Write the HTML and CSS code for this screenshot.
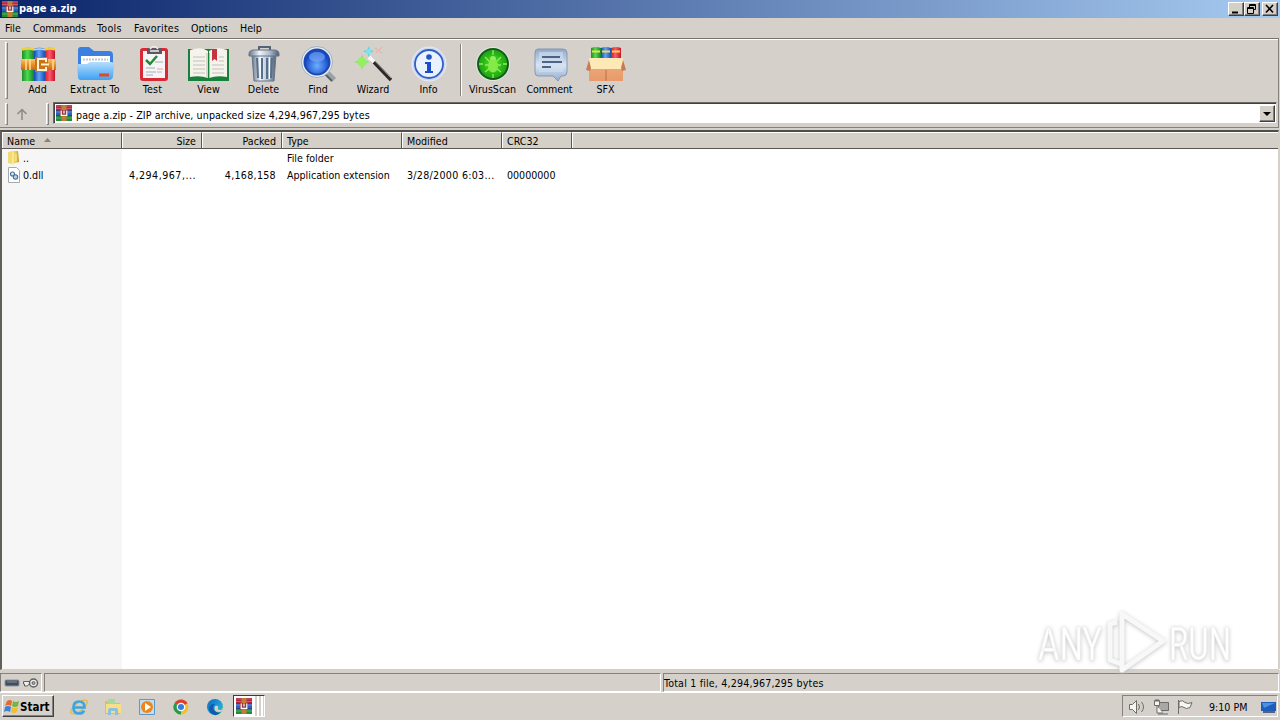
FILE: index.html
```html
<!DOCTYPE html>
<html lang="en">
<head>
<meta charset="utf-8">
<title>page a.zip</title>
<link rel="stylesheet" href="styles.css">
</head>
<body>
<svg class="defs" width="0" height="0">
  <defs>
    <linearGradient id="red" x2="1" y2="0"><stop offset="0" stop-color="#c8202f"/><stop offset=".45" stop-color="#ff5967"/><stop offset="1" stop-color="#c2142b"/></linearGradient>
    <linearGradient id="green" x2="1" y2="0"><stop offset="0" stop-color="#1c8f2d"/><stop offset=".45" stop-color="#4fd94d"/><stop offset="1" stop-color="#12832c"/></linearGradient>
    <linearGradient id="blue" x2="1" y2="0"><stop offset="0" stop-color="#1747a8"/><stop offset=".45" stop-color="#5aa5f8"/><stop offset="1" stop-color="#1d4cb0"/></linearGradient>
    <linearGradient id="belt" x2="0" y2="1"><stop offset="0" stop-color="#fbc569"/><stop offset=".5" stop-color="#e8912b"/><stop offset="1" stop-color="#c9680f"/></linearGradient>
    <linearGradient id="folder" x2="0" y2="1"><stop offset="0" stop-color="#b5defd"/><stop offset="1" stop-color="#3fa0f3"/></linearGradient>
    <linearGradient id="steel" x2="1" y2="0"><stop offset="0" stop-color="#66758a"/><stop offset=".35" stop-color="#eef4fa"/><stop offset=".7" stop-color="#a9b9cb"/><stop offset="1" stop-color="#4c5b70"/></linearGradient>
    <linearGradient id="note" x2="0" y2="1"><stop offset="0" stop-color="#8fa8c8"/><stop offset=".5" stop-color="#d9e5f4"/><stop offset="1" stop-color="#93abcb"/></linearGradient>
    <linearGradient id="gold" x2="1" y2="0"><stop offset="0" stop-color="#f7e694"/><stop offset=".6" stop-color="#e9c94c"/><stop offset="1" stop-color="#bd8f1c"/></linearGradient>
    <linearGradient id="box" x2="0" y2="1"><stop offset="0" stop-color="#eda676"/><stop offset="1" stop-color="#e79a6b"/></linearGradient>
    <linearGradient id="edge" x2="1" y2="1"><stop offset="0" stop-color="#0e63b7"/><stop offset=".55" stop-color="#1b9de0"/><stop offset="1" stop-color="#4ccb6c"/></linearGradient>
    <radialGradient id="lens" cy=".65"><stop offset="0" stop-color="#6eb0ff"/><stop offset="1" stop-color="#1549c8"/></radialGradient>
    <radialGradient id="glow"><stop offset="0" stop-color="#55e51f"/><stop offset="1" stop-color="#18a010"/></radialGradient>
    <symbol id="rar" viewBox="0 0 16 16">
      <path d="M0 0h16v16H0z" fill="#3f2440"/>
      <path d="M0 0h16v5H0z" fill="#b5263f"/><path d="M0 1h16M0 3.500h16" stroke="#e0788a" stroke-width=".6"/>
      <path d="M0 5.500h16v5H0z" fill="#2c5fc0"/><path d="M0 7h16" stroke="#82a8e8" stroke-width=".7"/>
      <path d="M0 11h16v5H0z" fill="#218a3c"/><path d="M0 13h16" stroke="#6cc47c" stroke-width=".7"/>
      <path d="M5.500 0h5v16h-5z" fill="#c47c34"/>
      <path d="M4 5h8v6H4z" fill="#93383e"/><path d="M5.200 5.500v4.800h5.600V5.500M8 5.500v3" fill="none" stroke="#fff" stroke-width="1.200"/>
    </symbol>
  </defs>
</svg>
<div class="screen">
  <header class="title">
    <svg class="i16"><use href="#rar"/></svg><span class="title-text">page a.zip</span>
    <div class="winbtns">
      <span class="wb"><svg width="14" height="12"><path d="M3 8.500h6v2H3z"/></svg></span>
      <span class="wb"><svg width="14" height="12"><path d="M4.500 4V1.500h6v5H8M4 2.500h7M2.500 4.500h6v6h-6zM2 5.500h7" fill="none" stroke="#000"/></svg></span>
      <span class="wb close"><svg width="14" height="12"><path d="M3 2l7 7.500M10 2L3 9.500" stroke="#000" stroke-width="1.600"/></svg></span>
    </div>
  </header>
  <nav class="menu"><span class="m1">File</span><span class="m2">Commands</span><span class="m3">Tools</span><span class="m4">Favorites</span><span class="m5">Options</span><span>Help</span></nav>
  <div class="rebar">
    <div class="toolbar">
      <i class="grip"></i>
      <div class="tool t-add"><svg width="38" height="38" viewBox="0 0 38 38">
        <path d="M3 4q6-3 12 0v32H3z" fill="url(#green)"/><path d="M15 4q5-3 11 0v32H15z" fill="url(#blue)"/><path d="M26 4q5-3 10 0v32H26z" fill="url(#red)"/>
        <path d="M3 4.500q6-2 12 0M26 4.500q5-2 10 0" stroke="#f1cd43" stroke-width="2.500" fill="none"/><path d="M15 5q5-2 11 0" stroke="#b9d6f4" stroke-width="1.500" fill="none"/>
        <path d="M2 14h35v11H2z" fill="url(#belt)"/><path d="M7 14v11M11 14v11M34 14v11" stroke="#ffdf96" stroke-width="1.500"/><path d="M16 12h13v15H16z" fill="#c77418"/><path d="M27 17v-3h-8v11h8v-3M22 19.500h8" stroke="#fff1d1" stroke-width="2" fill="none"/></svg><span>Add</span></div>
      <div class="tool t-extract"><svg width="38" height="38" viewBox="0 0 38 38">
        <path d="M2 5q0-3 3-3h8l5 4h15q4 0 4 4v20H2z" fill="#3b80e0"/><path d="M5 11h29v12H5z" fill="#fff"/><path d="M7 14.500h25" stroke="#bfc6ce" stroke-width="2" stroke-dasharray="2 1"/><path d="M1 19h10l3-2h21q3 0 3 3l-1 12q-1 3-4 3H5q-3 0-3-3z" fill="url(#folder)"/><path d="M23 30h10" stroke="#df4b29" stroke-width="3"/></svg><span>Extract To</span></div>
      <div class="tool t-test"><svg width="38" height="38" viewBox="0 0 38 38">
        <rect x="6" y="3" width="28" height="33" rx="3" fill="#d92836"/><path d="M9 6h22v27H9z" fill="#f5f5f7"/><path d="M13 3h15v6H13z" fill="#5e5660"/><path d="M16 4q4-5 8 0M16 6h9" stroke="#eee" stroke-width="1.500" fill="none"/><path d="M12 15l4 4 7-8" stroke="#258a38" stroke-width="2.500" fill="none"/><path d="M21 17h8M12 23h9M12 27h10M12 30h7" stroke="#a9a9b1" stroke-width="1"/><path d="M23 24h6M23 27h5" stroke="#e1a4aa"/></svg><span>Test</span></div>
      <div class="tool t-view"><svg width="43" height="38" viewBox="0 0 43 38">
        <path d="M1 4h41v32H1z" fill="#15813b"/><path d="M3 5q11-4 18 1v27q-8-3-18-1zM22 6q8-5 18-1v27q-10-2-18 1z" fill="#f6f3eb"/><path d="M6 12h12M6 16h12M6 20h12M6 24h12M6 28h12M25 20h12M25 24h12M25 28h12M32 12h5M32 16h5" stroke="#c2c1bd"/><path d="M20 8v25M22.500 8v25" stroke="#c2bda8"/><path d="M25 4h5v12l-2.500-2-2.500 2z" fill="#c83142"/></svg><span>View</span></div>
      <div class="tool t-del"><svg width="38" height="38" viewBox="0 0 38 38">
        <path d="M14 5V2h11v3" stroke="#536275" stroke-width="2" fill="none"/><path d="M7 10h24l-2 26H9z" fill="url(#steel)" stroke="#66758a"/><path d="M12 13l1 20M17 13v21M22 13v21M27 13l-1 20" stroke="#586f8b" stroke-width="2"/><path d="M14.500 12l1 22M24.500 12v22" stroke="#f4f8fc"/><path d="M4 9q0-4 5-4h20q5 0 5 4v2H4z" fill="url(#steel)" stroke="#66758a"/></svg><span>Delete</span></div>
      <div class="tool t-find"><svg width="38" height="38" viewBox="0 0 38 38">
        <path d="M26 26l9 9" stroke="#9ba1a9" stroke-width="6"/><path d="M25 28l8 8" stroke="#5b6067" stroke-width="2"/><circle cx="18" cy="17" r="15.500" fill="#e8edf3" stroke="#a1b0c1"/><circle cx="18" cy="17" r="12.500" fill="url(#lens)" stroke="#1c48af" stroke-width="2"/><ellipse cx="18" cy="12" rx="8" ry="5" fill="#79a8f8" opacity=".65"/></svg><span>Find</span></div>
      <div class="tool t-wiz"><svg width="38" height="38" viewBox="0 0 38 38">
        <path d="M17 14l20 21" stroke="#2c2928" stroke-width="3.500"/><path d="M18 13l19 20" stroke="#9b9894"/><path d="M15 12l5 5" stroke="#f5f5f2" stroke-width="4"/><path d="M8 9l2 6 6 2-6 2-2 6-2-6-6-2 6-2z" fill="#8fe56c"/><circle cx="8" cy="17" r="4.500" fill="#93f05f"/><path d="M15 1l1 4 4 1-4 2-1 4-2-4-4-2 4-1z" fill="#5bd3e5"/><circle cx="14.500" cy="6.500" r="2.500" fill="#7fe3f0"/><path d="M21 3l7 5M28 2l-6 6" stroke="#e9aaa6"/></svg><span>Wizard</span></div>
      <div class="tool t-info"><svg width="38" height="38" viewBox="0 0 38 38">
        <circle cx="19" cy="19" r="17" fill="#ccd7f0" stroke="#e9edf7"/><circle cx="19" cy="19" r="14" fill="#e9f2fd" stroke="#2f5fc8" stroke-width="1.800"/><circle cx="19" cy="12" r="2.800" fill="#2654c4"/><path d="M15 17h6v9h2v2h-8v-2h2v-7h-2z" fill="#1c4fc5"/></svg><span>Info</span></div>
      <i class="sep"></i>
      <div class="tool t-virus"><svg width="38" height="38" viewBox="0 0 38 38">
        <circle cx="19" cy="19" r="17" fill="#dceadc"/><circle cx="19" cy="19" r="15" fill="url(#glow)" stroke="#155b1b" stroke-width="2"/><circle cx="19" cy="19" r="10" fill="none" stroke="#2fae22"/><path d="M19 5v5M19 29v4M5 19h4M29 19h4M11 12l5 5M27 12l-5 5M11 27l5-4M27 27l-5-4M11 20h16" stroke="#8cf060" stroke-width="1.300"/><circle cx="19" cy="14" r="3" fill="#90f05c"/><ellipse cx="19" cy="21" rx="5" ry="6.500" fill="#85ea48"/></svg><span>VirusScan</span></div>
      <div class="tool t-comment"><svg width="38" height="38" viewBox="0 0 38 38">
        <path d="M7 4h25q4 0 4 4v19q0 4-4 4h-2l-3 5-5-5H7q-3 0-3-4V8q0-4 3-4z" fill="url(#note)" stroke="#8499b7"/><path d="M8 7h24v20H8z" fill="#d0dff2" opacity=".6"/><path d="M11 12h18M11 17h20M11 22h9" stroke="#263d61" stroke-width="1.500"/></svg><span>Comment</span></div>
      <div class="tool t-sfx"><svg width="42" height="38" viewBox="0 0 42 38">
        <path d="M6 3q5-2 10 0v12H6z" fill="url(#green)"/><path d="M16 3q5-2 10 0v12H16z" fill="url(#blue)"/><path d="M26 3q5-2 10 0v12H26z" fill="url(#red)"/><path d="M7 6.500h8M17 6.500h8M27 6.500h8" stroke="#f8db43" stroke-width="1.800"/><path d="M4 22h34v14H4z" fill="url(#box)"/><path d="M4 13h34v11H4z" fill="#fce9b5"/><path d="M4 15l-3 10 4 1 1-3zM38 15l3 10-4 1-1-3z" fill="#c67b50"/><path d="M21 25v11" stroke="#bb7149"/></svg><span>SFX</span></div>
    </div>
    <div class="address">
      <i class="grip"></i><svg class="up" width="12" height="12"><path d="M6 12V2M1.500 6L6 1.500 10.500 6" fill="none" stroke="#8c8986" stroke-width="1.500"/></svg><i class="grip second"></i>
      <div class="combo"><svg class="i16"><use href="#rar"/></svg><span>page a.zip - ZIP archive, unpacked size 4,294,967,295 bytes</span><b class="drop"><svg width="12" height="8"><path d="M2 2h8L6 6z"/></svg></b></div>
    </div>
  </div>
  <main class="list">
    <div class="grid head"><span>Name <svg width="8" height="5"><path d="M0 4l3.500-4L7 4z" fill="#85827c"/></svg></span><span class="right">Size</span><span class="right">Packed</span><span>Type</span><span>Modified</span><span>CRC32</span><span></span></div>
    <div class="grid row"><span class="name"><svg width="16" height="16"><path d="M2 2l5-1v13l-5-1z" fill="#efda75"/><path d="M6 1h6l1 11-4 1-3 2z" fill="url(#gold)"/><path d="M7 3v11M10 4v7" stroke="#fff2a5"/></svg>..</span><span></span><span></span><span>File folder</span></div>
    <div class="grid row"><span class="name"><svg width="16" height="16"><path d="M2.500.5h8l3 3v12h-11z" fill="#fff" stroke="#a3abb1"/><circle cx="6.500" cy="7" r="2" fill="#dce9f2" stroke="#416a9a" stroke-width="1.100"/><circle cx="9.500" cy="10" r="2.200" fill="#b8d0e6" stroke="#426e9c" stroke-width="1.100"/></svg>0.dll</span><span class="right num size">4,294,967,...</span><span class="right num">4,168,158</span><span class="type">Application extension</span><span class="num">3/28/2000 6:03...</span><span>00000000</span></div>
    <div class="stripe"></div>
  </main>
  <footer class="status">
    <div class="cell icons"><svg width="36" height="16"><rect x="1" y="5" width="14" height="6" rx="1" fill="#3e4c5c" stroke="#8d979f"/><path d="M3 7h10" stroke="#8796a5"/><path d="M19.500 6.500h7v3h-2l-1 1.500h-3V9h-1z" fill="#eee" stroke="#62605e"/><circle cx="29.500" cy="8" r="4" fill="#ededeb" stroke="#62605e" stroke-width="1.500"/><circle cx="29.500" cy="8" r="1.500" fill="#aaa" stroke="#62605e"/></svg></div><div class="cell blank"></div><div class="cell total">Total 1 file, 4,294,967,295 bytes</div>
  </footer>
  <div class="taskbar">
    <div class="start"><svg width="16" height="16"><path d="M3 2q3-2 5 0L7 7Q4 5 1 7z" fill="#e46a2d"/><path d="M9 2q3 2 6 0l-1 5q-3 2-6 0z" fill="#75b542"/><path d="M1 8q3-2 6 0l-1 5Q3 11 0 13z" fill="#3b83d5"/><path d="M8 8q3 2 6 0l-1 5q-3 2-6 0z" fill="#efbe31"/></svg>Start</div>
    <div class="launch">
      <svg width="18" height="18"><ellipse cx="9" cy="9" rx="10" ry="4" transform="rotate(-38 9 9)" fill="none" stroke="#e4ba41" stroke-width="1.300"/><path d="M3.500 9.500h11q0-6-5.500-6T3.500 9.500q0 6 5.500 6 4 0 5-3" fill="none" stroke="#3fa5e0" stroke-width="2.700"/></svg>
      <svg width="18" height="18"><path d="M1 3h6l1 2h8v11H1z" fill="#e6bd4d"/><path d="M4 1h7v9H4z" fill="#a6d8a0"/><path d="M2 6h15v9H2z" fill="#f5df88"/><path d="M4 17v-5q0-2 2-2h6q2 0 2 2v5h-3v-4H7v4z" fill="#8dbfe0"/></svg>
      <svg width="18" height="18"><path d="M1.500 1.500h15v15h-15z" fill="#c4dcf0" stroke="#5c99c6"/><circle cx="9" cy="9" r="6" fill="#ef861c"/><path d="M7 5l6 4-6 4z" fill="#fff"/></svg>
      <svg width="18" height="18"><circle cx="9" cy="9" r="7.500" fill="#f0c12e"/><path d="M9 9L2.500 5.200Q5 1.500 9 1.500t6.500 3.700z" fill="#dc3e32"/><path d="M9 9L2.500 5.200Q0 10 3 13.500t6 3z" fill="#279a51"/><circle cx="9" cy="9" r="3.700" fill="#377fdd" stroke="#fff" stroke-width="1.300"/></svg>
      <svg width="18" height="18"><circle cx="9" cy="9" r="8" fill="url(#edge)"/><path d="M9 6q-3 2-1 6 3 4 7 2-4 5-9 2Q1 12 4 8q2-3 5-2z" fill="#135aab"/><path d="M9 8q4-1 3 2-1 2 3 2 2-1 2-3 0 5-4 5-6 0-4-6z" fill="#d5d0ca"/></svg>
    </div>
    <div class="active"><span><svg class="i16"><use href="#rar"/></svg></span><i></i><i></i></div>
    <div class="tray"><svg width="74" height="18"><g fill="#f5f5f2" stroke="#6e6b68"><path d="M5.500 6.500h3l4-4v13l-4-4h-3z"/><path d="M14.500 6q2 3 0 6M17.500 4q4 5 0 10" fill="none"/><path d="M34.500 4.500h10v8h-10zM38 13v2m-4 1h10" fill="#aaa8a5"/><path d="M30.500 2.500h5v5h-5zM33 8v7h6M32 1v3m2-3v3"/><path d="M54.500 2v14M55 3.500q4-2 6 1 3 2 7 0l-2 5q-4 2-6 0-2-2-5 0z"/></g></svg><span>9:10 PM</span><svg class="desk" width="17" height="16"><path d="M1 3h15v9H1z" fill="#205dba"/><path d="M2 4h13L4 9z" fill="#4d91e0"/><path d="M3 13h12" stroke="#293f66" stroke-width="1.500"/></svg></div>
  </div>
  <svg class="mark" width="240" height="72" viewBox="0 0 240 72"><g class="brand"><text x="4" y="53" textLength="64" lengthAdjust="spacingAndGlyphs">ANY</text><text x="135" y="53" textLength="62" lengthAdjust="spacingAndGlyphs">RUN</text><path d="M83 15l-7 2v36l11 4M88 7v56l41-29z"/></g></svg>
</div>
</body>
</html>
```
FILE: styles.css
```css
* { box-sizing: border-box; }
body { margin: 0; overflow: hidden; background: #d4d0c8; }
svg { display: block; flex: none; }
.defs { position: absolute; }
.screen { position: relative; width: 1280px; height: 720px; display: flex; flex-direction: column; background: #d5d0ca; color: #000; font: 10.6px/14px "DejaVu Sans Condensed", "DejaVu Sans", sans-serif; font-stretch: condensed; white-space: nowrap; }
.i16 { width: 16px; height: 16px; }
.title { height: 18px; display: flex; padding: 1px 2px 0; background: linear-gradient(90deg, #0a246a, #a6caf0); color: #fff; }
.title-text { margin: 1px 0 0 1px; font-weight: bold; font-size: 11px; }
.winbtns { display: flex; margin-left: auto; padding-top: 1px; }
.wb { width: 16px; height: 14px; background: #d4d0c8; border: 1px solid; border-color: #fff #404040 #404040 #fff; box-shadow: inset -1px -1px #808080; }
.close { margin-left: 2px; }
.menu { height: 20px; display: flex; padding: 3px 0 0 5px; }
.m1 { width: 28px; } .m2 { width: 64px; letter-spacing: -0.15px; } .m3 { width: 37px; letter-spacing: .3px; } .m4 { width: 57px; letter-spacing: .25px; } .m5 { width: 49px; }
.rebar { height: 90px; margin-right: 1px; border-top: 1px solid #77736e; border-right: 1px solid #85817c; border-bottom: 1px solid #85817c; }
.toolbar { height: 63px; border-top: 1px solid #fff; display: flex; padding-left: 5px; }
.grip { width: 3px; height: 57px; margin: 2px 2px 0 0; background: #d4d0c8; border: 1px solid; border-color: #fff #85817c #85817c #fff; }
.tool { height: 61px; padding-top: 5px; display: flex; flex-direction: column; align-items: center; }
.tool > span { margin-top: -1px; }
.tool > svg { height: 38px; }
.t-add { width: 55px; } .t-extract { width: 60px; letter-spacing: .3px; } .t-test { width: 55px; letter-spacing: .2px; } .t-view { width: 57px; } .t-del { width: 53px; } .t-find { width: 56px; } .t-wiz { width: 54px; } .t-info { width: 57px; }
.sep { width: 2px; height: 52px; margin: 4px 2px 0 3px; border-left: 1px solid #85817c; border-right: 1px solid #fff; }
.t-virus { width: 57px; } .t-comment { width: 57px; letter-spacing: -0.1px; } .t-sfx { width: 55px; }
.address { display: flex; height: 24px; padding-left: 5px; }
.address .grip { height: 22px; margin-top: 1px; }
.up { margin: 6px 0 0 6px; }
.address .second { margin-left: 18px; margin-right: 4px; }
.combo { flex: 1; height: 22px; margin: 0 1px 0 0; display: flex; background: #fff; border: 1px solid; border-color: #6c6864 #d4d0c8 #d4d0c8 #6c6864; box-shadow: inset 1px 1px #404040; padding: 2px 1px 1px 2px; }
.combo span { margin: 3px 0 0 4px; letter-spacing: .1px; }
.drop { margin-left: auto; width: 16px; height: 17px; background: #d4d0c8; border: 1px solid; border-color: #fff #404040 #404040 #fff; box-shadow: inset -1px -1px #808080; padding: 4px 1px; }
.list { position: relative; height: 540px; margin: 2px 1px 0 0; background: #fff; border: 1px solid #85817c; border-top: 2px solid #504c48; border-bottom-color: #d4d0c8; border-left: 2px solid #625e5a; border-right-color: #d4d0c8; display: flex; flex-direction: column; }
.grid { display: grid; grid-template-columns: 120px 80px 80px 120px 100px 70px 1fr; }
.head { height: 17px; background: #d4d0c8; border-bottom: 1px solid #5b5752; }
.head span { padding: 1px 5px 0 4px; border-right: 1px solid #5b5752; border-left: 1px solid #fff; border-top: 1px solid #fff; }
.head span:last-child { border-right: 0; }
.head svg { display: inline-block; margin: 0 0 2px 6px; }
.right { text-align: right; }
.row { height: 17px; }
.row > span { padding: 2px 6px 0 5px; }
.row .num { letter-spacing: .3px; }
.row .size { letter-spacing: .5px; }
.grid .name { display: flex; background: #f6f6f6; padding: 2px 0 0 4px; }
.name svg { margin: -1px 1px 0 0; }
.stripe { width: 120px; flex: 1; background: #f6f6f6; }
.status { height: 24px; border-top: 1px solid #fff; border-bottom: 1px solid #fff; padding-top: 3px; display: flex; margin-top: -1px; }
.cell { border: 1px solid; border-color: #85817c #fff #fff #85817c; height: 19px; }
.icons { width: 42px; padding: 1px 3px; } .blank { width: 617px; margin-left: 2px; } .total { flex: 1; margin: 0 1px 0 2px; padding: 2px 0; letter-spacing: .18px; }
.taskbar { flex: 1; display: flex; padding: 2px 2px 1px; }
.start { width: 52px; height: 22px; border: 1px solid; border-color: #fff #404040 #404040 #fff; box-shadow: inset -1px -1px #85817c; display: flex; font-weight: bold; font-size: 11.5px; align-items: center; padding: 1px 0 0 1px; }
.launch { display: flex; gap: 16px; padding: 3px 0 0 16px; }
.active { width: 32px; height: 22px; margin-left: 9px; border: 1px solid; border-color: #403c38 #fff #fff #403c38; display: flex; gap: 2px; }
.active span { background: #fff; padding: 2px 2px; width: 21px; }
.active i { width: 2px; background: #fff; }
.tray { margin-left: auto; width: 156px; height: 22px; border: 1px solid; border-color: #85817c #fff #fff #85817c; display: flex; align-items: center; padding-top: 2px; }
.tray > svg:first-child { margin-left: 1px; }
.tray span { margin-left: 11px; width: 39px; }
.desk { margin-left: auto; }
.mark { position: absolute; left: 1034px; top: 607px; overflow: visible; }
.brand { font: 47px Roboto, sans-serif; fill: #fff; stroke: #ececec; stroke-width: .6; filter: drop-shadow(0 1px 2px #c4c4c4); }
.brand path { fill: none; stroke: #f8f8f8; stroke-width: 5; stroke-linejoin: round; }
```
